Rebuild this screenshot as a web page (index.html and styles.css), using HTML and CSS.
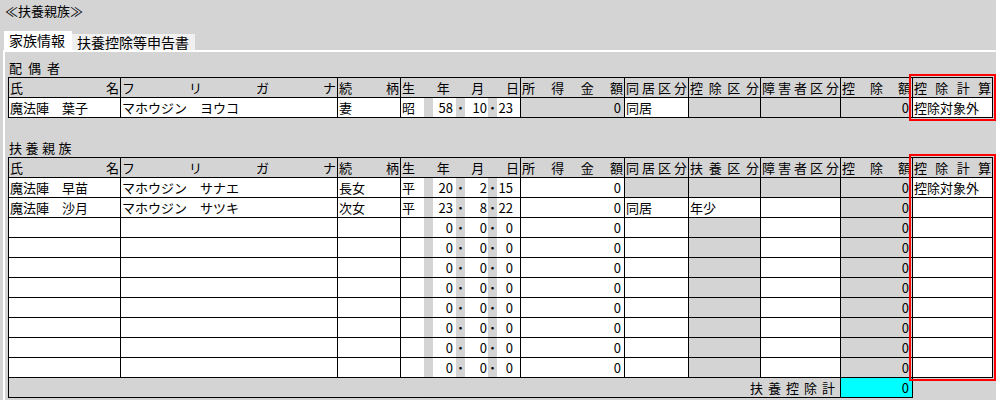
FILE: index.html
```html
<!DOCTYPE html>
<html lang="ja">
<head>
<meta charset="utf-8">
<title>扶養親族</title>
<link rel="stylesheet" href="styles.css">
</head>
<body>
<div class="title">≪扶養親族≫</div>
<div class="tabs">
  <div class="tab active">家族情報</div>
  <div class="tab inactive">扶養控除等申告書</div>
</div>
<div class="panel">
  <div class="label spouse">配偶者</div>
  <div class="tblwrap">
    <div class="tbl">
      <div class="c h"><span>氏</span><span>名</span></div>
      <div class="c h"><span>フ</span><span>リ</span><span>ガ</span><span>ナ</span></div>
      <div class="c h"><span>続</span><span>柄</span></div>
      <div class="c h"><span>生</span><span>年</span><span>月</span><span>日</span></div>
      <div class="c h"><span>所</span><span>得</span><span>金</span><span>額</span></div>
      <div class="c h"><span>同</span><span>居</span><span>区</span><span>分</span></div>
      <div class="c h"><span>控</span><span>除</span><span>区</span><span>分</span></div>
      <div class="c h"><span>障</span><span>害</span><span>者</span><span>区</span><span>分</span></div>
      <div class="c h"><span>控</span><span>除</span><span>額</span></div>
      <div class="c h"><span>控</span><span>除</span><span>計</span><span>算</span></div>

      <div class="c">魔法陣　葉子</div>
      <div class="c">マホウジン　ヨウコ</div>
      <div class="c">妻</div>
      <div class="c date"><span class="era">昭</span><span class="gap"></span><span class="num y">58</span><span class="dot">･</span><span class="num m">10</span><span class="dot">･</span><span class="num d">23</span></div>
      <div class="c g r">0</div>
      <div class="c">同居</div>
      <div class="c g"></div>
      <div class="c g"></div>
      <div class="c g r">0</div>
      <div class="c">控除対象外</div>
    </div>
    <div class="hl"></div>
  </div>

  <div class="label dep">扶養親族</div>
  <div class="tblwrap">
    <div class="tbl">
      <div class="c h"><span>氏</span><span>名</span></div>
      <div class="c h"><span>フ</span><span>リ</span><span>ガ</span><span>ナ</span></div>
      <div class="c h"><span>続</span><span>柄</span></div>
      <div class="c h"><span>生</span><span>年</span><span>月</span><span>日</span></div>
      <div class="c h"><span>所</span><span>得</span><span>金</span><span>額</span></div>
      <div class="c h"><span>同</span><span>居</span><span>区</span><span>分</span></div>
      <div class="c h"><span>扶</span><span>養</span><span>区</span><span>分</span></div>
      <div class="c h"><span>障</span><span>害</span><span>者</span><span>区</span><span>分</span></div>
      <div class="c h"><span>控</span><span>除</span><span>額</span></div>
      <div class="c h"><span>控</span><span>除</span><span>計</span><span>算</span></div>

      <div class="c">魔法陣　早苗</div>
      <div class="c">マホウジン　サナエ</div>
      <div class="c">長女</div>
      <div class="c date"><span class="era">平</span><span class="gap"></span><span class="num y">20</span><span class="dot">･</span><span class="num m">2</span><span class="dot">･</span><span class="num d">15</span></div>
      <div class="c r">0</div>
      <div class="c g"></div>
      <div class="c g"></div>
      <div class="c g"></div>
      <div class="c g r">0</div>
      <div class="c">控除対象外</div>

      <div class="c">魔法陣　沙月</div>
      <div class="c">マホウジン　サツキ</div>
      <div class="c">次女</div>
      <div class="c date"><span class="era">平</span><span class="gap"></span><span class="num y">23</span><span class="dot">･</span><span class="num m">8</span><span class="dot">･</span><span class="num d">22</span></div>
      <div class="c r">0</div>
      <div class="c">同居</div>
      <div class="c">年少</div>
      <div class="c"></div>
      <div class="c g r">0</div>
      <div class="c"></div>

      <div class="c"></div><div class="c"></div><div class="c"></div>
      <div class="c date"><span class="era"></span><span class="gap"></span><span class="num y">0</span><span class="dot">･</span><span class="num m">0</span><span class="dot">･</span><span class="num d">0</span></div>
      <div class="c r">0</div><div class="c"></div><div class="c g"></div><div class="c"></div><div class="c g r">0</div><div class="c"></div>

      <div class="c"></div><div class="c"></div><div class="c"></div>
      <div class="c date"><span class="era"></span><span class="gap"></span><span class="num y">0</span><span class="dot">･</span><span class="num m">0</span><span class="dot">･</span><span class="num d">0</span></div>
      <div class="c r">0</div><div class="c"></div><div class="c g"></div><div class="c"></div><div class="c g r">0</div><div class="c"></div>

      <div class="c"></div><div class="c"></div><div class="c"></div>
      <div class="c date"><span class="era"></span><span class="gap"></span><span class="num y">0</span><span class="dot">･</span><span class="num m">0</span><span class="dot">･</span><span class="num d">0</span></div>
      <div class="c r">0</div><div class="c"></div><div class="c g"></div><div class="c"></div><div class="c g r">0</div><div class="c"></div>

      <div class="c"></div><div class="c"></div><div class="c"></div>
      <div class="c date"><span class="era"></span><span class="gap"></span><span class="num y">0</span><span class="dot">･</span><span class="num m">0</span><span class="dot">･</span><span class="num d">0</span></div>
      <div class="c r">0</div><div class="c"></div><div class="c g"></div><div class="c"></div><div class="c g r">0</div><div class="c"></div>

      <div class="c"></div><div class="c"></div><div class="c"></div>
      <div class="c date"><span class="era"></span><span class="gap"></span><span class="num y">0</span><span class="dot">･</span><span class="num m">0</span><span class="dot">･</span><span class="num d">0</span></div>
      <div class="c r">0</div><div class="c"></div><div class="c g"></div><div class="c"></div><div class="c g r">0</div><div class="c"></div>

      <div class="c"></div><div class="c"></div><div class="c"></div>
      <div class="c date"><span class="era"></span><span class="gap"></span><span class="num y">0</span><span class="dot">･</span><span class="num m">0</span><span class="dot">･</span><span class="num d">0</span></div>
      <div class="c r">0</div><div class="c"></div><div class="c g"></div><div class="c"></div><div class="c g r">0</div><div class="c"></div>

      <div class="c"></div><div class="c"></div><div class="c"></div>
      <div class="c date"><span class="era"></span><span class="gap"></span><span class="num y">0</span><span class="dot">･</span><span class="num m">0</span><span class="dot">･</span><span class="num d">0</span></div>
      <div class="c r">0</div><div class="c"></div><div class="c g"></div><div class="c"></div><div class="c g r">0</div><div class="c"></div>

      <div class="c"></div><div class="c"></div><div class="c"></div>
      <div class="c date"><span class="era"></span><span class="gap"></span><span class="num y">0</span><span class="dot">･</span><span class="num m">0</span><span class="dot">･</span><span class="num d">0</span></div>
      <div class="c r">0</div><div class="c"></div><div class="c g"></div><div class="c"></div><div class="c g r">0</div><div class="c"></div>
    </div>
    <div class="hl"></div>
  </div>
  <div class="total">
    <div class="total-label">扶養控除計</div>
    <div class="total-val">0</div>
  </div>
</div>
</body>
</html>
```

FILE: styles.css
```css
html, body {
  margin: 0;
  padding: 0;
}
body {
  background: #d4d4d4;
  font-family: "Noto Sans CJK JP", "Noto Sans", sans-serif;
  font-size: 13px;
  color: #000;
  width: 996px;
  height: 400px;
  overflow: hidden;
}
.title {
  height: 22px;
  line-height: 22px;
  padding-left: 5px;
}
.tabs {
  display: flex;
  align-items: flex-end;
  height: 28px;
  padding-left: 4px;
}
.tab {
  font-size: 14px;
  padding: 0 6px 0 5px;
  white-space: nowrap;
}
.tab.active {
  background: #fff;
  height: 19px;
  line-height: 19px;
  padding-right: 7px;
}
.tab.inactive {
  background: #f0f0f0;
  height: 16px;
  line-height: 16px;
}
.panel {
  margin-left: 3px;
  border-top: 2px solid #fff;
  border-left: 2px solid #fff;
  padding-left: 3px;
  height: 360px;
}
.label {
  height: 18px;
  line-height: 18px;
  padding-left: 1px;
  margin-top: 7px;
}
.label.spouse {
  letter-spacing: 6px;
}
.label.dep {
  margin-top: 21px;
  letter-spacing: 3.5px;
}
.tblwrap {
  position: relative;
  width: max-content;
}
.tbl {
  display: grid;
  grid-template-columns: 111px 216px 62px 119px 103px 63px 71px 79px 71px 79px;
  grid-auto-rows: 19px;
  gap: 1px;
  background: #000;
  border: 1px solid #000;
  width: max-content;
}
.c {
  background: #fff;
  line-height: 19px;
  padding: 0 1px;
  white-space: nowrap;
  overflow: hidden;
}
.h {
  background: #d4d4d4;
  display: flex;
  justify-content: space-between;
}
.g {
  background: #d4d4d4;
}
.r {
  text-align: right;
  padding-right: 3px;
}
.date {
  display: grid;
  grid-template-columns: 23px 9px 23px 9px 23px 9px 23px;
  padding: 0;
}
.era {
  padding-left: 1px;
}
.gap {
  background: #d4d4d4;
}
.dot {
  background: #d4d4d4;
  text-align: center;
  font-weight: bold;
}
.num {
  text-align: right;
}
.num.y {
  padding-right: 3px;
}
.num.m {
  padding-right: 1px;
}
.num.d {
  padding-right: 7px;
}
.hl {
  position: absolute;
  left: 901px;
  right: -3px;
  top: -3px;
  bottom: -3px;
  border: 2px solid #f00;
  pointer-events: none;
}
.total {
  display: flex;
  width: max-content;
  border: 1px solid #000;
  border-top: none;
  height: 19px;
}
.total-label {
  width: 831px;
  text-align: right;
  line-height: 19px;
  letter-spacing: 5px;
  background: #d4d4d4;
}
.total-val {
  width: 68px;
  padding-right: 3px;
  border-left: 1px solid #000;
  background: #00ffff;
  text-align: right;
  line-height: 19px;
}
```
